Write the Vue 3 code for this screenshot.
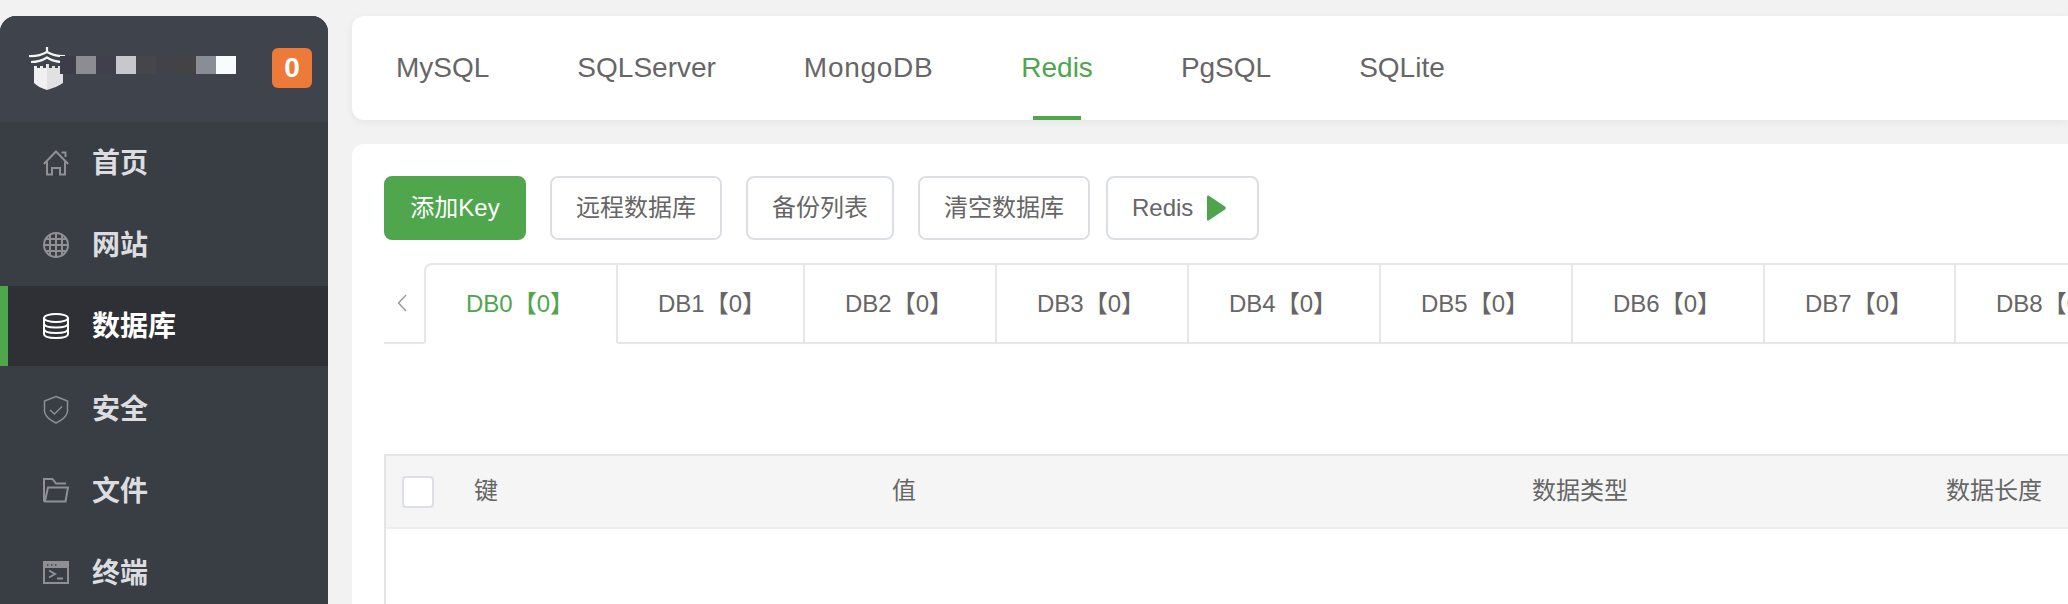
<template>
  <div class="page">
    <aside class="sidebar">
      <div class="brand">
        <svg class="logo" width="38" height="43" viewBox="0 0 38 43">
          <g fill="none" stroke="#f4f4f4" stroke-width="2.2">
            <path d="M19 0 V6" />
            <path d="M1 9 Q11 9.5 19 5 Q27 9.5 37 9" />
            <path d="M3 15 Q12 15 19 10.5 Q26 15 35 15" />
          </g>
          <path d="M6 19 H9 V21 H12 V19 H15 V21 H18 V17 H19 V43 C13 41 9 39 6 36 Z" fill="#f0f0f0" />
          <path d="M19 17 H21 V21 H24 V19 H27 V21 H30 V19 H34 L35 22 V36 C31 39 25 41 19 43 Z" fill="#e1e1e1" />
        </svg>
        <div class="mosaic">
          <span v-for="(b, i) in mosaic" :key="i" class="tile" :style="{ width: b[0] + 'px', background: b[1] }"></span>
        </div>
        <span class="badge">0</span>
      </div>
      <nav class="menu">
        <div v-for="item in menu" :key="item.key" class="menu-item" :class="{ active: item.key === 'db' }">
          <svg class="menu-icon" width="26" height="26" viewBox="0 0 26 26" fill="none" stroke="currentColor" stroke-width="2">
            <template v-if="item.key === 'home'">
              <path d="M0.8 14 L13 1.5 L25.2 14" />
              <path d="M4 11.5 V24.5 H9 V18 H17 V24.5 H22 V11.5" />
              <path d="M18.5 2.5 H22.5 V7" />
            </template>
            <template v-else-if="item.key === 'site'">
              <circle cx="13" cy="13" r="12" />
              <path d="M7 2.5 V23.5 M13 1 V25 M19 2.5 V23.5 M2.5 7 H23.5 M1 13 H25 M2.5 19 H23.5" />
            </template>
            <template v-else-if="item.key === 'db'">
              <ellipse cx="13" cy="5" rx="12" ry="4" />
              <path d="M1 5 V21 C1 23.5 6 25 13 25 C20 25 25 23.5 25 21 V5" />
              <path d="M1 10.5 C1 13 6 14.5 13 14.5 C20 14.5 25 13 25 10.5" />
              <path d="M1 16 C1 18.5 6 20 13 20 C20 20 25 18.5 25 16" />
            </template>
            <template v-else-if="item.key === 'safe'">
              <path d="M13 0.5 L24.5 5 V15 C24.5 20 19 24 13 27 C7 24 1.5 20 1.5 15 V5 Z" stroke-width="1.5" />
              <path d="M7 14 L11.5 18 L19 10.5" stroke-width="1.5" />
            </template>
            <template v-else-if="item.key === 'file'">
              <path d="M1 23.5 V1 H9.5 L13 5.5 H23" />
              <path d="M1 23.5 H22.5 L25 9.5 H5 L2 23" />
            </template>
            <template v-else>
              <rect x="1" y="2" width="24" height="21" />
              <path d="M1 5 H25" stroke-width="6" />
              <path d="M6 10.5 L12 14 L6 17.5 M14 18.5 H20" />
              <path d="M4 5 H5.5 M8 5 H9.5 M12 5 H13.5" stroke="#393d44" stroke-width="1.5" />
            </template>
          </svg>
          <span>{{ item.label }}</span>
        </div>
      </nav>
    </aside>

    <main class="main">
      <div class="card top-card">
        <div v-for="t in dbTypes" :key="t" class="type-tab" :class="{ active: t === 'Redis' }">{{ t }}</div>
      </div>

      <div class="card content-card">
        <div class="toolbar">
          <button class="btn btn-primary">添加Key</button>
          <button class="btn">远程数据库</button>
          <button class="btn">备份列表</button>
          <button class="btn">清空数据库</button>
          <button class="btn btn-run">
            Redis
            <svg width="19" height="26" viewBox="0 0 19 26"><path d="M1.5 0.5 L18 11.5 Q19.5 13 18 14.5 L1.5 25.5 Q0 26 0 24.5 V1.5 Q0 0 1.5 0.5 Z" fill="#4fa44c" /></svg>
          </button>
        </div>

        <div class="db-tabs">
          <div class="tab-prev">
            <svg width="10" height="18" viewBox="0 0 10 18" fill="none" stroke="#999" stroke-width="1.4"><path d="M9 1 L1.5 9 L9 17" /></svg>
          </div>
          <div v-for="(tab, i) in dbTabs" :key="tab.name" class="db-tab" :class="{ active: i === 0 }" :style="{ width: tab.width + 'px' }">{{ tab.name }}【0】</div>
        </div>

        <div class="table">
          <div class="thead">
            <div class="check-cell"><span class="checkbox"></span></div>
            <div class="th">键</div>
            <div class="th">值</div>
            <div class="th">数据类型</div>
            <div class="th">数据长度</div>
          </div>
        </div>
      </div>
    </main>
  </div>
</template>

<script setup>
const mosaic = [
  [16, '#3b3e48'], [20, '#8b8e91'], [20, '#3e414b'], [20, '#c5c8cc'], [20, '#444749'],
  [20, '#404349'], [20, '#434245'], [20, '#898e96'], [20, '#f8fcff'], [8, '#3f434b']
];

const menu = [
  { key: 'home', label: '首页' },
  { key: 'site', label: '网站' },
  { key: 'db', label: '数据库' },
  { key: 'safe', label: '安全' },
  { key: 'file', label: '文件' },
  { key: 'term', label: '终端' }
];

const dbTypes = ['MySQL', 'SQLServer', 'MongoDB', 'Redis', 'PgSQL', 'SQLite'];

const dbTabs = [
  { name: 'DB0', width: 194 },
  { name: 'DB1', width: 187 },
  { name: 'DB2', width: 192 },
  { name: 'DB3', width: 192 },
  { name: 'DB4', width: 192 },
  { name: 'DB5', width: 192 },
  { name: 'DB6', width: 192 },
  { name: 'DB7', width: 191 },
  { name: 'DB8', width: 192 }
];
</script>

<style>
html, body {
  margin: 0;
  overflow: hidden;
}
</style>

<style scoped>
.page {
  display: flex;
  width: 2068px;
  height: 604px;
  overflow: hidden;
  background: #f2f2f2;
  font-family: "Liberation Sans", "Noto Sans CJK SC", sans-serif;
  color: #666;
}

.sidebar {
  flex: none;
  width: 328px;
  margin-top: 16px;
  background: #393d44;
  border-radius: 16px 16px 0 0;
  overflow: hidden;
}

.brand {
  display: flex;
  align-items: center;
  height: 106px;
  padding-left: 28px;
  box-sizing: border-box;
  background: #3f444c;
}

.logo {
  flex: none;
  margin-top: -2px;
}

.mosaic {
  display: flex;
  height: 18px;
  margin-left: -6px;
  margin-top: -8px;
}

.tile {
  display: block;
}

.badge {
  margin-left: auto;
  margin-right: 16px;
  width: 40px;
  height: 40px;
  margin-top: -2px;
  border-radius: 6px;
  background: #ee7a3a;
  color: #fff;
  font-size: 28px;
  font-weight: 700;
  line-height: 40px;
  text-align: center;
}

.menu-item {
  display: flex;
  align-items: center;
  height: 82px;
  padding-left: 43px;
  box-sizing: border-box;
  color: #8e9094;
}

.menu-item span {
  margin-left: 23px;
  padding-bottom: 5px;
  font-size: 28px;
  font-weight: 700;
  color: #dcdde0;
}

.menu-item.active {
  height: 80px;
  margin-bottom: 2px;
  padding-left: 35px;
  border-left: 8px solid #4fa64d;
  background: #2e3036;
  color: #fff;
}

.menu-item.active span {
  color: #fff;
}

.menu-icon {
  flex: none;
  overflow: visible;
}

.main {
  flex: 1;
  min-width: 0;
  margin-left: 24px;
  padding-top: 16px;
  display: flex;
  flex-direction: column;
  gap: 24px;
}

.card {
  background: #fff;
  border-radius: 12px 0 0 0;
}

.top-card {
  display: flex;
  flex: none;
  height: 104px;
  border-radius: 12px 0 0 12px;
  box-shadow: 0 2px 8px rgba(0, 0, 0, 0.06);
}

.type-tab {
  position: relative;
  padding: 0 44px;
  font-size: 28px;
  line-height: 104px;
}

.type-tab:nth-child(3) {
  letter-spacing: 0.7px;
}

.type-tab.active {
  color: #4fa64d;
}

.type-tab.active::after {
  content: "";
  position: absolute;
  left: 50%;
  bottom: 0;
  width: 48px;
  height: 4px;
  margin-left: -24px;
  background: #4fa64d;
}

.content-card {
  flex: 1;
  padding: 32px 0 0 32px;
  overflow: hidden;
}

.toolbar {
  display: flex;
}

.btn {
  display: flex;
  align-items: center;
  height: 64px;
  padding: 0 24px 5px;
  margin-right: 24px;
  box-sizing: border-box;
  border: 2px solid #dcdfe6;
  border-radius: 8px;
  background: #fff;
  color: #666;
  font-family: inherit;
  font-size: 24px;
}

.btn-primary {
  width: 142px;
  justify-content: center;
  border-color: #4fa64d;
  background: #4fa64d;
  color: #fff;
}

.btn:nth-child(4) {
  margin-right: 16px;
}

.btn-run {
  gap: 14px;
  padding: 0 31px 0 24px;
}

.db-tabs {
  display: flex;
  width: 1800px;
  height: 81px;
  margin-top: 23px;
}

.tab-prev {
  flex: none;
  display: flex;
  align-items: center;
  width: 40px;
  padding-left: 13px;
  box-sizing: border-box;
  border-bottom: 2px solid #e4e7ed;
}

.db-tab {
  flex: none;
  padding-left: 40px;
  box-sizing: border-box;
  border-top: 2px solid #e4e7ed;
  border-right: 2px solid #e4e7ed;
  border-bottom: 2px solid #e4e7ed;
  font-size: 24px;
  line-height: 78px;
  white-space: nowrap;
}

.db-tab.active {
  border-left: 2px solid #e4e7ed;
  border-bottom-color: #fff;
  border-top-left-radius: 8px;
  color: #4fa64d;
}

.table {
  width: 1800px;
  height: 200px;
  margin-top: 110px;
  border-top: 2px solid #e4e4e4;
  border-left: 2px solid #e4e4e4;
}

.thead {
  display: grid;
  grid-template-columns: 88px 418px 640px 414px 1fr;
  align-items: center;
  height: 73px;
  box-sizing: border-box;
  background: #f5f5f5;
  border-bottom: 2px solid #eeeeee;
  font-size: 24px;
}

.th {
  padding-bottom: 6px;
}

.check-cell {
  display: flex;
  padding-left: 16px;
}

.checkbox {
  width: 32px;
  height: 32px;
  box-sizing: border-box;
  border: 2px solid #dcdfe6;
  border-radius: 4px;
  background: #fff;
}
</style>
